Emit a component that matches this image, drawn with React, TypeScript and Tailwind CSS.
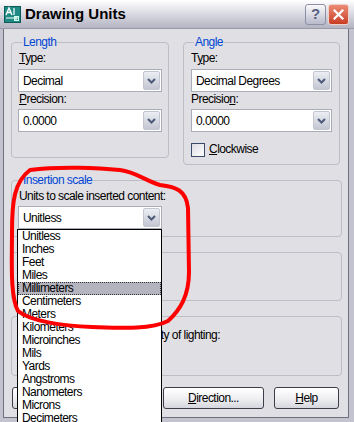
import type { ReactNode } from 'react';

const units = [
  'Unitless',
  'Inches',
  'Feet',
  'Miles',
  'Millimeters',
  'Centimeters',
  'Meters',
  'Kilometers',
  'Microinches',
  'Mils',
  'Yards',
  'Angstroms',
  'Nanometers',
  'Microns',
  'Decimeters',
  'Decameters',
  'Hectometers',
];

function Group({ title, className, children }: { title: string; className?: string; children?: ReactNode }) {
  return (
    <fieldset className={`rounded-[4px] border border-[#bdbdc6] px-[7px] ${className ?? ''}`}>
      <legend className="ml-[3px] px-[1px] text-[12px] leading-[15px] text-[#0046d5]">{title}</legend>
      {children}
    </fieldset>
  );
}

function DropButton() {
  return (
    <div className="mr-[1px] flex h-[19px] w-[17px] items-center justify-center rounded-[2px] border border-[#c3c6d0] bg-gradient-to-b from-[#eceef4] to-[#c4c7d3]">
      <svg width="9" height="6" viewBox="0 0 9 6">
        <path d="M1 1 L4.5 4.5 L8 1" fill="none" stroke="#4d5a78" strokeWidth="2" />
      </svg>
    </div>
  );
}

function Combo({ value, className }: { value: string; className?: string }) {
  return (
    <div className={`flex h-[23px] items-center border border-[#a9adb8] bg-white pl-[4px] ${className ?? ''}`}>
      <span className="flex-1 text-[12px] leading-none text-black">{value}</span>
      <DropButton />
    </div>
  );
}

function Button({ children, className }: { children: ReactNode; className?: string }) {
  return (
    <div
      className={`flex h-[22px] items-center justify-center rounded-[3px] border border-[#3d3d48] bg-gradient-to-b from-[#ffffff] via-[#f0f0f4] to-[#d6d6de] text-[12px] text-black ${className ?? ''}`}
    >
      {children}
    </div>
  );
}

function AppIcon() {
  return (
    <svg width="17" height="17" viewBox="0 0 17 17">
      <rect x="0.5" y="0.5" width="16" height="16" fill="#1f8a84" stroke="#0d5c58" />
      <path d="M2 9 L5 2 L8 9 M3.3 6.5 H6.7" fill="none" stroke="#ffffff" strokeWidth="1.4" />
      <path d="M10 2 V9 M2 12 H15 M12 10 V15" fill="none" stroke="#ffffff" strokeWidth="1.2" />
      <rect x="10.5" y="10.5" width="4" height="4" fill="none" stroke="#cfe" strokeWidth="1" />
    </svg>
  );
}

export default function App() {
  return (
    <div className="relative h-[422px] w-[354px] overflow-hidden bg-[#c3c3cf] font-['Liberation_Sans',Arial,sans-serif] tracking-[-0.55px] text-black">
      {/* title bar */}
      <div className="flex h-[29px] items-center border-b border-[#9a9aa8] bg-gradient-to-b from-[#ffffff] via-[#d9d9e2] to-[#b4b4c2] pl-[4px] pr-[5px]">
        <AppIcon />
        <span className="ml-[4px] flex-1 text-[15px] font-bold tracking-normal text-black">Drawing Units</span>
        <div className="flex h-[21px] w-[21px] items-center justify-center rounded-[3px] border border-[#8e8fa6] bg-gradient-to-b from-[#fbfbfd] to-[#b9bacb] text-[15px] font-bold tracking-normal text-[#58617f]">
          ?
        </div>
        <div className="ml-[2px] flex h-[21px] w-[21px] items-center justify-center rounded-[3px] border border-[#f0d0c8] bg-gradient-to-b from-[#ec8a74] to-[#c83c22]">
          <svg width="11" height="11" viewBox="0 0 11 11">
            <path d="M1.5 1.5 L9.5 9.5 M9.5 1.5 L1.5 9.5" stroke="#ffffff" strokeWidth="2.2" strokeLinecap="square" />
          </svg>
        </div>
      </div>

      {/* dialog body */}
      <div className="ml-[3px] mr-[5px] h-[389px] border border-t-0 border-[#70707e] bg-[#e0dfe3]">
        <div className="flex h-full flex-col pl-[7px] pr-[6px] pt-[6px]">
          <div className="flex items-start gap-[14px]">
            <Group title="Length" className="h-[123px] w-[158px]">
              <div className="mt-[1px] text-[12px] leading-[15px]">
                <span className="underline">T</span>ype:
              </div>
              <Combo value="Decimal" className="mt-[3px] -mx-[1px]" />
              <div className="text-[12px] leading-[15px]">
                <span className="underline">P</span>recision:
              </div>
              <Combo value="0.0000" className="mt-[2px] -mx-[1px]" />
            </Group>
            <Group title="Angle" className="h-[130px] w-[157px]">
              <div className="mt-[1px] text-[12px] leading-[15px]">
                T<span className="underline">y</span>pe:
              </div>
              <Combo value="Decimal Degrees" className="mt-[3px]" />
              <div className="text-[12px] leading-[15px]">
                Precisio<span className="underline">n</span>:
              </div>
              <Combo value="0.0000" className="mt-[2px]" />
              <div className="mt-[10px] flex items-center">
                <div className="h-[14px] w-[14px] border border-[#3a4a6a] bg-gradient-to-br from-[#dcdce4] to-[#ffffff]" />
                <span className="ml-[4px] text-[12px] leading-[15px]">
                  <span className="underline">C</span>lockwise
                </span>
              </div>
            </Group>
          </div>

          <Group title="Insertion scale" className="mt-[8px] h-[64px]">
            <div className="mt-[1px] text-[12px] leading-[15px]">Units to scale inserted content:</div>
            <Combo value="Unitless" className="mt-[2px] -ml-[1px] w-[144px]" />
          </Group>

          <Group title="Sample Output" className="mt-[8px] h-[56px]">
            <div className="text-[12px] leading-[15px]">1.5000,2.0039,0.0000</div>
            <div className="text-[12px] leading-[15px]">3.0000&lt;45,0.0000</div>
          </Group>

          <Group title="Lighting" className="mt-[8px] h-[67px]">
            <div className="mt-[4px] text-[12px] leading-[15px]">Units for specifying the intensity of lighting:</div>
            <Combo value="International" className="mt-[3px] -ml-[1px] w-[144px]" />
          </Group>

          <div className="mt-[11px] flex">
            <Button className="ml-[1px] w-[70px]">OK</Button>
            <Button className="ml-[5px] w-[70px]">Cancel</Button>
            <Button className="ml-[6px] w-[101px]">
              <span className="underline">D</span>irection...
            </Button>
            <Button className="ml-[10px] w-[65px]">
              <span className="underline">H</span>elp
            </Button>
          </div>
        </div>
      </div>

      {/* open dropdown list */}
      <div className="absolute left-[17px] top-[229px] w-[145px] border border-black bg-white">
        {units.map((u) => (
          <div
            key={u}
            className={`h-[13px] pl-[4px] text-[12px] leading-[13px] ${
              u === 'Millimeters' ? 'bg-[#b4b4be] outline outline-1 outline-dotted outline-[#333] -outline-offset-1' : ''
            }`}
          >
            {u}
          </div>
        ))}
      </div>

      {/* hand-drawn red annotation */}
      <svg className="pointer-events-none absolute left-0 top-0" width="354" height="422" viewBox="0 0 354 422">
        <path
          d="M30 170 C60 166 100 168 120 170 C136 172 146 181 160 185 C176 187 186 190 188 208 L189 272 C189 296 180 310 168 321 C150 330 120 328 92 327 C62 326 30 321 18 311 C10 296 12 262 12 232 C12 202 14 182 30 170 Z"
          fill="none"
          stroke="#ff0000"
          strokeWidth="4"
          strokeLinejoin="round"
        />
      </svg>
    </div>
  );
}
